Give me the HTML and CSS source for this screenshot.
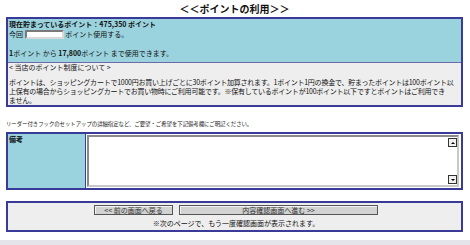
FILE: index.html
```html
<!DOCTYPE html>
<html lang="ja">
<head>
<meta charset="utf-8">
<title>ポイントの利用</title>
<link rel="stylesheet" href="styles.css">
</head>
<body>
<div class="page">
  <h1 class="title">＜＜ポイントの利用＞＞</h1>

  <div class="box">
    <div class="cyan">
      <div class="line"><b>現在貯まっているポイント：475,350 ポイント</b></div>
      <div class="line">今回 <span class="pt-input"></span> ポイント使用する。</div>
      <div class="line">&nbsp;</div>
      <div class="line"><b>1</b>ポイント から <b>17,800</b>ポイント まで使用できます。</div>
    </div>
    <div class="gray">
      <p class="g-head">&lt; 当店のポイント制度について &gt;</p>
      <p class="g-body">ポイントは、ショッピングカートで1000円お買い上げごとに30ポイント加算されます。1ポイント1円の換金で、貯まったポイントは100ポイント以<br>上保有の場合からショッピングカートでお買い物時にご利用可能です。※保有しているポイントが100ポイント以下ですとポイントはご利用でき<br>ません。</p>
    </div>
  </div>

  <p class="note">リーダー付きフックのセットアップの詳細指定など、ご要望・ご希望を下記備考欄にご明記ください。</p>

  <div class="box memo-box">
    <div class="memo-label">備考</div>
    <div class="memo-cell">
      <div class="memo">
        <textarea class="memo-text" aria-label="備考"></textarea>
        <div class="scroll">
          <span class="sbtn"><span class="tri up"></span></span>
          <span class="sbtn"><span class="tri down"></span></span>
        </div>
      </div>
    </div>
  </div>

  <div class="box action-box">
    <div class="buttons">
      <button class="btn btn-back" type="button">&lt;&lt; 前の画面へ戻る</button>
      <button class="btn btn-next" type="button">内容確認画面へ進む &gt;&gt;</button>
    </div>
    <p class="action-note">※次のページで、もう一度確認画面が表示されます。</p>
  </div>
</div>
<div class="bottom-strip"></div>
</body>
</html>
```

FILE: styles.css
```css
html, body {
  margin: 0;
  padding: 0;
  background: #ffffff;
}

body {
  font-family: "Noto Sans CJK JP", "Liberation Sans", sans-serif;
  font-size: 7px;
  line-height: 9px;
  color: #111111;
}

.page {
  margin: 0 7px 0 6px;
}

.title {
  margin: 0;
  height: 17px;
  line-height: 17px;
  font-size: 10px;
  font-weight: 700;
  text-align: center;
  color: #111111;
}

.box {
  border: 2px solid #3a3a98;
}

.cyan {
  background: #9ad3de;
  padding: 1px 2px 4px 1px;
}

.cyan .line {
  height: 9.5px;
  line-height: 9.5px;
  display: flex;
  align-items: center;
  white-space: pre;
}

.pt-input {
  display: inline-block;
  width: 35px;
  height: 5px;
  background: #ffffff;
  border-style: solid;
  border-width: 2px;
  border-color: #7a7a7a #d8d8d8 #d8d8d8 #7a7a7a;
}

.gray {
  background: #eeeeee;
  border-top: 1px solid #6b6ba8;
  padding: 0 0 0 1px;
}

.gray p {
  margin: 0;
}

.g-head {
  margin-bottom: 6px !important;
}

.g-body {
  letter-spacing: -0.24px;
}

.note {
  margin: 13px 0 4px 0;
  font-size: 5.4px;
  line-height: 8px;
  letter-spacing: -0.03px;
  color: #222222;
}

.memo-box {
  display: flex;
  height: 54px;
}

.memo-label {
  width: 78px;
  background: #9ad3de;
  border-right: 1px solid #3a3a98;
  padding: 1px 1px;
  font-weight: 700;
  box-sizing: border-box;
}

.memo-cell {
  flex: 1;
  background: #ffffff;
  padding: 1px 2px 1px 1px;
  display: flex;
}

.memo {
  flex: 1;
  display: flex;
  border-style: solid;
  border-width: 2px;
  border-color: #8a8a8a #c8c8c8 #c8c8c8 #8a8a8a;
  background: #ffffff;
}

.memo-text {
  flex: 1;
  border: 0;
  margin: 0;
  padding: 0;
  resize: none;
  outline: none;
  background: transparent;
}

.scroll {
  width: 9px;
  padding: 1px 0;
  display: flex;
  flex-direction: column;
  justify-content: space-between;
}

.sbtn {
  width: 7px;
  height: 7px;
  border: 1px solid #333333;
  background: #f0f0f0;
  display: flex;
  align-items: center;
  justify-content: center;
}

.tri {
  width: 0;
  height: 0;
  border-left: 2px solid transparent;
  border-right: 2px solid transparent;
}

.tri.up {
  border-bottom: 2px solid #000000;
}

.tri.down {
  border-top: 2px solid #000000;
}

.action-box {
  margin-top: 11px;
  background: #eeeeee;
  padding: 2px 0 2px 0;
}

.buttons {
  display: flex;
  justify-content: center;
  gap: 6px;
  padding-left: 3px;
}

.btn {
  height: 10px;
  margin: 0;
  padding: 0;
  font-family: inherit;
  font-size: 7px;
  line-height: 8px;
  color: #333333;
  background: #d2d2d2;
  border: 1px solid #555555;
  box-shadow: inset 1px 1px 0 #f4f4f4;
}

.btn-back {
  width: 79px;
}

.btn-next {
  width: 199px;
}

.action-note {
  margin: 4px 0 0 0;
  text-align: center;
  line-height: 9px;
  padding-left: 3px;
}

.bottom-strip {
  margin-top: 8px;
  height: 6px;
  background: #e4e4ea;
}
```
